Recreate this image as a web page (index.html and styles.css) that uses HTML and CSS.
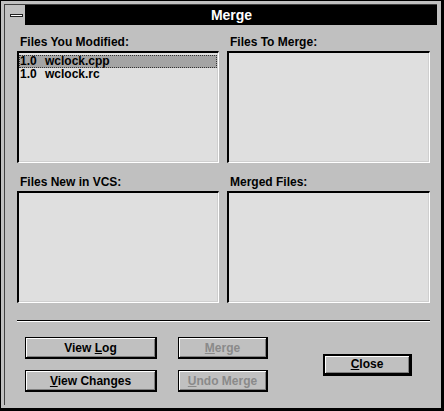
FILE: index.html
```html
<!DOCTYPE html>
<html>
<head>
<meta charset="utf-8">
<link rel="stylesheet" href="styles.css">
</head>
<body>
<div class="window">
  <div class="frame">
    <div class="titlebar">
      <div class="sysmenu"><span class="sysbar"></span></div>
      <div class="caption">Merge</div>
    </div>
    <div class="client">
      <div class="panes">
        <div class="pane">
          <div class="label">Files You Modified:</div>
          <div class="listbox">
            <div class="row selected"><span class="ver">1.0</span>wclock.cpp</div>
            <div class="row"><span class="ver">1.0</span>wclock.rc</div>
          </div>
        </div>
        <div class="pane">
          <div class="label">Files To Merge:</div>
          <div class="listbox"></div>
        </div>
        <div class="pane">
          <div class="label">Files New in VCS:</div>
          <div class="listbox"></div>
        </div>
        <div class="pane">
          <div class="label">Merged Files:</div>
          <div class="listbox"></div>
        </div>
      </div>
      <div class="separator"></div>
      <div class="buttons">
        <div class="col col-wide">
          <button class="btn"><span>View <u>L</u>og</span></button>
          <button class="btn"><span><u>V</u>iew Changes</span></button>
        </div>
        <div class="col col-mid">
          <button class="btn" disabled><span><u>M</u>erge</span></button>
          <button class="btn" disabled><span><u>U</u>ndo Merge</span></button>
        </div>
        <button class="btn btn-default"><span><u>C</u>lose</span></button>
      </div>
    </div>
  </div>
</div>
</body>
</html>
```
FILE: styles.css
```css
html, body {
  margin: 0;
  padding: 0;
  background: #c0c0c0;
}
.window {
  width: 444px;
  height: 411px;
  box-sizing: border-box;
  border-style: solid;
  border-color: #000;
  border-width: 1px 3px 3px 1px;
  padding: 3px 4px 3px 3px;
  background: #c0c0c0;
  font-family: "Liberation Sans", Arial, sans-serif;
  font-size: 12px;
  font-weight: bold;
  color: #000;
}
.frame {
  height: 100%;
  box-sizing: border-box;
  border-top: 1px solid #404040;
  border-left: 1px solid #404040;
  display: flex;
  flex-direction: column;
}
.titlebar {
  display: flex;
  height: 20px;
}
.sysmenu {
  width: 21px;
  box-sizing: border-box;
  border-right: 1px solid #000;
  background: #c0c0c0;
  display: flex;
  align-items: flex-start;
}
.sysbar {
  display: block;
  width: 13px;
  height: 3px;
  box-sizing: border-box;
  margin: 9px 0 0 5px;
  border: 1px solid #202020;
  background: #fff;
}
.caption {
  flex: 1;
  background: #000;
  color: #fff;
  font-size: 14px;
  line-height: 20px;
  text-align: center;
}
.client {
  flex: 1;
}
.panes {
  display: grid;
  grid-template-columns: 202px 203px;
  column-gap: 8px;
  row-gap: 12px;
  padding: 10px 7px 0 12px;
}
.label {
  line-height: 14px;
  height: 14px;
  padding-left: 3px;
  margin-bottom: 2px;
  white-space: nowrap;
}
.listbox {
  height: 112px;
  box-sizing: border-box;
  background: #dfdfdf;
  border-style: solid;
  border-width: 2px 1px 1px 2px;
  border-color: #000 #fff #fff #000;
  box-shadow: inset -1px -1px 0 #cfcfcf;
  padding: 2px 1px 0 0;
}
.row {
  height: 13px;
  line-height: 13px;
  padding-left: 1px;
  white-space: nowrap;
}
.row.selected {
  background: #a4a4a4;
  outline: 1px dotted #333;
  outline-offset: -1px;
}
.ver {
  display: inline-block;
  width: 25px;
}
.separator {
  width: 413px;
  height: 0;
  margin: 17px 0 0 12px;
  border-top: 1px solid #000;
  border-bottom: 1px solid #fff;
}
.buttons {
  display: flex;
  align-items: center;
  margin-top: 15px;
  padding-left: 20px;
}
.col {
  display: flex;
  flex-direction: column;
  gap: 11px;
}
.col-wide .btn {
  width: 132px;
}
.col-mid {
  margin-left: 21px;
}
.col-mid .btn {
  width: 90px;
}
.btn {
  height: 22px;
  box-sizing: border-box;
  padding: 0;
  margin: 0;
  font-family: "Liberation Sans", Arial, sans-serif;
  font-size: 12px;
  font-weight: bold;
  color: #000;
  background: #c0c0c0;
  border-style: solid;
  border-color: #000;
  border-width: 1px 2px 2px 1px;
  box-shadow: inset 1px 1px 0 #fff, inset -1px -1px 0 #808080;
  text-align: center;
  line-height: 16px;
}
.btn span {
  white-space: pre;
}
.btn:disabled {
  color: #8a8a8a;
}
.btn-default {
  width: 89px;
  margin-left: 55px;
  border-width: 2px 3px 3px 2px;
}
```
